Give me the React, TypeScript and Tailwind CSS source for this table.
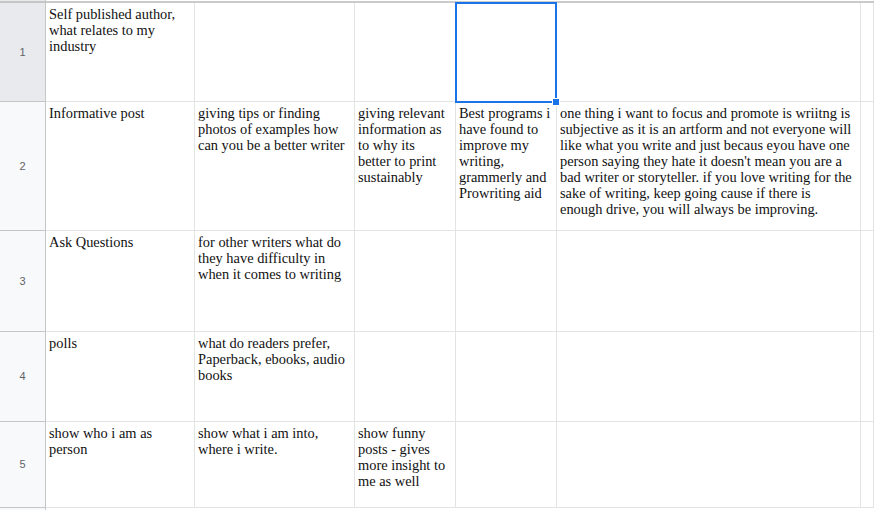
import React from 'react';

type Row = {
  num: number;
  height: string;
  header: string;
  cells: string[][];
};

// each cell holds the lines exactly as the sheet wraps them
const rows: Row[] = [
  {
    num: 1,
    height: 'h-[99px]',
    header: 'bg-[#e8eaed]',
    cells: [['Self published author,', 'what relates to my', 'industry'], [], [], [], [], []],
  },
  {
    num: 2,
    height: 'h-[129px]',
    header: 'bg-[#f8f9fa]',
    cells: [
      ['Informative post'],
      ['giving tips or finding', 'photos of examples how', 'can you be a better writer'],
      ['giving relevant', 'information as', 'to why its', 'better to print', 'sustainably'],
      ['Best programs i', 'have found to', 'improve my', 'writing,', 'grammerly and', 'Prowriting aid'],
      [
        'one thing i want to focus and promote is wriitng is',
        'subjective as it is an artform and not everyone will',
        'like what you write and just becaus eyou have one',
        "person saying they hate it doesn't mean you are a",
        'bad writer or storyteller. if you love writing for the',
        'sake of writing, keep going cause if there is',
        'enough drive, you will always be improving.',
      ],
      [],
    ],
  },
  {
    num: 3,
    height: 'h-[101px]',
    header: 'bg-[#f8f9fa]',
    cells: [
      ['Ask Questions'],
      ['for other writers what do', 'they have difficulty in', 'when it comes to writing'],
      [], [], [], [],
    ],
  },
  {
    num: 4,
    height: 'h-[90px]',
    header: 'bg-[#f8f9fa]',
    cells: [
      ['polls'],
      ['what do readers prefer,', 'Paperback, ebooks, audio', 'books'],
      [], [], [], [],
    ],
  },
  {
    num: 5,
    height: 'h-[86px]',
    header: 'bg-[#f8f9fa]',
    cells: [
      ['show who i am as', 'person'],
      ['show what i am into,', 'where i write.'],
      ['show funny', 'posts - gives', 'more insight to', 'me as well'],
      [], [], [],
    ],
  },
];

const grid = 'grid grid-cols-[46px_149px_160px_101px_101px_304px_1fr]';

const Cell: React.FC<{ lines: string[]; selected?: boolean }> = ({ lines, selected }) => (
  <div
    className={
      'relative border-r border-b border-[#e2e3e3] pl-[3px] pr-[2px] pt-[3px] ' +
      (selected ? 'z-10' : 'overflow-hidden')
    }
  >
    {lines.map((l, i) => (
      <div key={i} className="whitespace-nowrap text-[14.4px] leading-[16px] text-[#111]">
        {l}
      </div>
    ))}
    {selected && (
      <div className="absolute -top-px -left-px -right-px -bottom-[2px] border-2 border-[#1a73e8]">
        <div className="absolute -right-[4px] -bottom-[4px] w-[6px] h-[6px] bg-[#1a73e8] outline outline-1 outline-white" />
      </div>
    )}
  </div>
);

export default function App() {
  return (
    <div className="w-[874px] h-[510px] overflow-hidden bg-white font-['Liberation_Serif',serif]">
      <div className={grid + ' h-[3px]'}>
        <div className="bg-[#e8eaed] border-r border-b-2 border-[#c4c7c5]" />
        <div className="col-span-6 border-b-2 border-[#c9cacb]" />
      </div>
      {rows.map((r) => (
        <div key={r.num} className={grid + ' ' + r.height}>
          <div
            className={
              'flex items-center justify-center border-r border-b border-[#c4c7c5] text-[11px] text-[#5f6368] ' +
              r.header
            }
          >
            <span className="font-['Liberation_Sans',sans-serif]">{r.num}</span>
          </div>
          {r.cells.map((c, i) => (
            <Cell key={i} lines={c} selected={r.num === 1 && i === 3} />
          ))}
        </div>
      ))}
      <div className={grid + ' h-[4px]'}>
        <div className="bg-[#f8f9fa] border-r border-[#c4c7c5]" />
        <div className="col-span-6" />
      </div>
    </div>
  );
}
